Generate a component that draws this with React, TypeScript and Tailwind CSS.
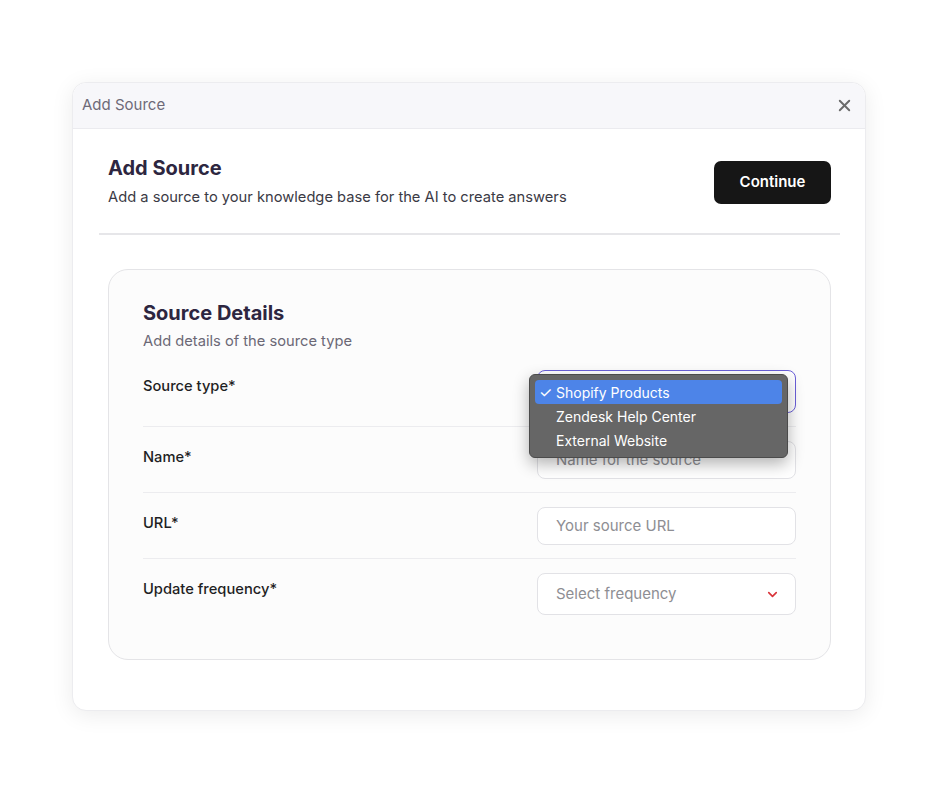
import React from 'react';
import { X, ChevronDown } from 'lucide-react';

interface FieldRow {
  label: string;
  placeholder: string;
  height: string;
  kind: 'select-open' | 'input' | 'select';
}

const rows: FieldRow[] = [
  { label: 'Source type*', placeholder: '', height: 'h-[43px]', kind: 'select-open' },
  { label: 'Name*', placeholder: 'Name for the source', height: 'h-[38px]', kind: 'input' },
  { label: 'URL*', placeholder: 'Your source URL', height: 'h-[38px]', kind: 'input' },
  { label: 'Update frequency*', placeholder: 'Select frequency', height: 'h-[42px]', kind: 'select' },
];

const options = ['Shopify Products', 'Zendesk Help Center', 'External Website'];

const SourceMenu: React.FC = () => (
  <div className="absolute left-[-8px] top-[4px] z-10 w-[259px] rounded-[6px] border border-[#4b4b4b] bg-[#666666] p-[5px] shadow-[0_6px_16px_rgba(0,0,0,0.3)]">
    {options.map((opt, i) => (
      <div
        key={opt}
        className={`flex h-[24px] items-center rounded-[4px] text-[14px] text-white ${
          i === 0 ? 'bg-[#4d84e8]' : ''
        }`}
      >
        <span className="w-[21px] pl-[4px] text-[15px] leading-none">{i === 0 ? '✓' : ''}</span>
        <span>{opt}</span>
      </div>
    ))}
  </div>
);

export default function App() {
  return (
    <div className="h-[788px] w-[940px] bg-white pl-[72px] pt-[82px] font-['Inter',sans-serif]">
      <div className="h-[629px] w-[794px] rounded-[14px] border border-[#ececef] bg-white shadow-[0_4px_22px_rgba(0,0,0,0.08)]">
        {/* Header */}
        <div className="flex h-[46px] items-center justify-between rounded-t-[14px] border-b border-[#ebebef] bg-[#f7f7fa] pl-[9px] pr-[11px]">
          <span className="text-[15px] text-[#6e6a78]">Add Source</span>
          <X className="h-[19px] w-[19px] text-[#6b6b6b]" strokeWidth={2.4} />
        </div>

        {/* Title row */}
        <div className="flex items-start justify-between pl-[35px] pr-[34px] pt-[25px]">
          <div>
            <div className="text-[20px] font-bold leading-[28px] text-[#2d2640]">Add Source</div>
            <div className="mt-[4px] text-[14.7px] leading-[22px] text-[#3b3a45]">
              Add a source to your knowledge base for the AI to create answers
            </div>
          </div>
          <button className="mt-[7px] h-[43px] w-[117px] rounded-[7px] bg-[#161616] text-[15px] font-semibold text-white">
            Continue
          </button>
        </div>

        <div className="ml-[26px] mr-[25px] mt-[25px] h-[2px] bg-[#e6e6e9]" />

        {/* Card */}
        <div className="ml-[35px] mr-[34px] mt-[34px] rounded-[20px] border border-[#e4e4e7] bg-[#fcfcfc] px-[34px] pb-[44px] pt-[29px]">
          <div className="text-[20px] font-bold leading-[28px] text-[#2d2640]">Source Details</div>
          <div className="mt-[3px] text-[14.7px] leading-[22px] text-[#6b6876]">Add details of the source type</div>

          <div className="mt-[18px]">
            {rows.map((row, i) => (
              <div
                key={row.label}
                className={`flex items-start justify-between ${
                  i < rows.length - 1 ? 'border-b border-[#ececef] pb-[13px]' : ''
                } ${i > 0 ? 'pt-[14px]' : ''}`}
              >
                <span className="pt-[5px] text-[14.7px] font-medium leading-[22px] text-[#1f1f24]">{row.label}</span>
                <div className="relative w-[259px]">
                  <div
                    className={`flex ${row.height} items-center justify-between rounded-[8px] bg-white px-[18px] text-[15px] text-[#8e8e93] ${
                      row.kind === 'select-open'
                        ? 'border-[1.5px] border-[#6a5fd8]'
                        : 'border border-[#e2e2e6]'
                    }`}
                  >
                    <span>{row.placeholder}</span>
                    {row.kind === 'select' && (
                      <ChevronDown className="mr-[-3px] h-[15px] w-[15px] text-[#d9343a]" strokeWidth={2.6} />
                    )}
                  </div>
                  {row.kind === 'select-open' && <SourceMenu />}
                </div>
              </div>
            ))}
          </div>
        </div>
      </div>
    </div>
  );
}
